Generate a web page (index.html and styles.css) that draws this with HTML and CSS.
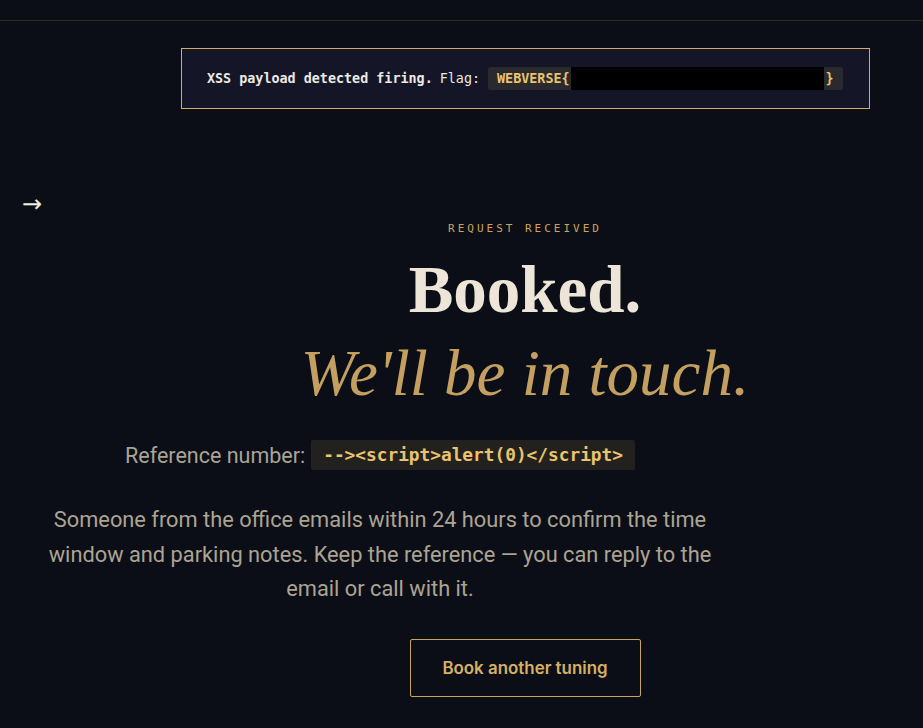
FILE: index.html
```html
<html>
  <head>
    <title>Booked</title>
    <link rel="stylesheet" href="styles.css">
  </head>
  <body>
    <div class="topbar"></div>
    <div class="banner">
      <b>XSS payload detected firing.</b>
      <span class="flag-label">Flag:</span>
      <span class="flag">WEBVERSE{<span class="redact"></span>}</span>
    </div>
    <div class="back">&rarr;</div>
    <div class="hero">
      <div class="eyebrow">REQUEST RECEIVED</div>
      <h1 class="title">Booked.</h1>
      <div class="subtitle">We'll be in touch.</div>
    </div>
    <div class="details">
      <div class="ref">
        <span class="ref-label">Reference number:</span>
        <code class="ref-code">--&gt;&lt;script&gt;alert(0)&lt;/script&gt;</code>
      </div>
      <p class="note">Someone from the office emails within 24 hours to confirm the time window and parking notes. Keep the reference &mdash; you can reply to the email or call with it.</p>
    </div>
    <div class="actions">
      <a class="btn" href="#">Book another tuning</a>
    </div>
  </body>
</html>
```

FILE: styles.css
```css
body {
  margin: 0;
  background: #0b0e16;
  color: #ece5d8;
  font-family: Roboto, "Liberation Sans", sans-serif;
}
.topbar {
  height: 20px;
  border-bottom: 1px solid #2c2a22;
}
.banner {
  box-sizing: border-box;
  width: 689px;
  height: 61px;
  margin: 27px 0 0 181px;
  padding: 0 25px;
  display: flex;
  align-items: center;
  gap: 8px;
  background: #141628;
  border: 1px solid #d3ad60;
  font-family: "DejaVu Sans Mono", monospace;
  font-size: 13.4px;
  color: #ece9e2;
  white-space: pre;
}
.flag-label {
  margin-left: -1px;
}
.flag {
  display: flex;
  align-items: center;
  height: 23px;
  padding: 0 9px;
  background: #2a2a2e;
  border-radius: 3px;
  color: #e9c46e;
  font-weight: bold;
}
.redact {
  display: inline-block;
  width: 253px;
  height: 23px;
  margin-left: 1px;
  margin-right: 2px;
  background: #000;
}
.back {
  margin: 80px 0 0 22px;
  font-size: 24px;
  line-height: 30px;
  color: #f2ece0;
  font-family: "DejaVu Sans", sans-serif;
}
.hero {
  padding-left: 127px;
  text-align: center;
}
.eyebrow {
  margin-top: 3px;
  font-family: "DejaVu Sans Mono", monospace;
  font-size: 11px;
  letter-spacing: 3px;
  color: #c9a55c;
}
.title {
  margin: 14px 0 0;
  font-family: "Liberation Serif", serif;
  font-size: 67px;
  font-weight: bold;
  line-height: 80px;
  color: #ece5d8;
}
.subtitle {
  margin-top: 4px;
  font-family: "Liberation Serif", serif;
  font-style: italic;
  font-size: 65px;
  line-height: 80px;
  color: #c4a060;
}
.details {
  width: 760px;
  text-align: center;
}
.ref {
  margin-top: 27px;
  display: flex;
  justify-content: center;
  align-items: center;
  gap: 6px;
}
.ref-label {
  font-size: 21.5px;
  color: #a9a496;
}
.ref-code {
  padding: 4px 12px;
  background: #23211e;
  border-radius: 2px;
  font-family: "DejaVu Sans Mono", monospace;
  font-weight: bold;
  font-size: 17.8px;
  line-height: 22px;
  color: #e9c46e;
}
.note {
  max-width: 690px;
  margin: 33px auto 0;
  font-size: 21.8px;
  line-height: 34.5px;
  color: #aba493;
}
.actions {
  padding-left: 127px;
  margin-top: 32px;
  display: flex;
  justify-content: center;
}
.btn {
  box-sizing: border-box;
  width: 231px;
  height: 58px;
  display: flex;
  align-items: center;
  justify-content: center;
  border: 1px solid #c9a55c;
  border-radius: 2px;
  font-family: Inter, sans-serif;
  font-weight: 600;
  font-size: 16.9px;
  color: #d6b062;
  text-decoration: none;
}
```
